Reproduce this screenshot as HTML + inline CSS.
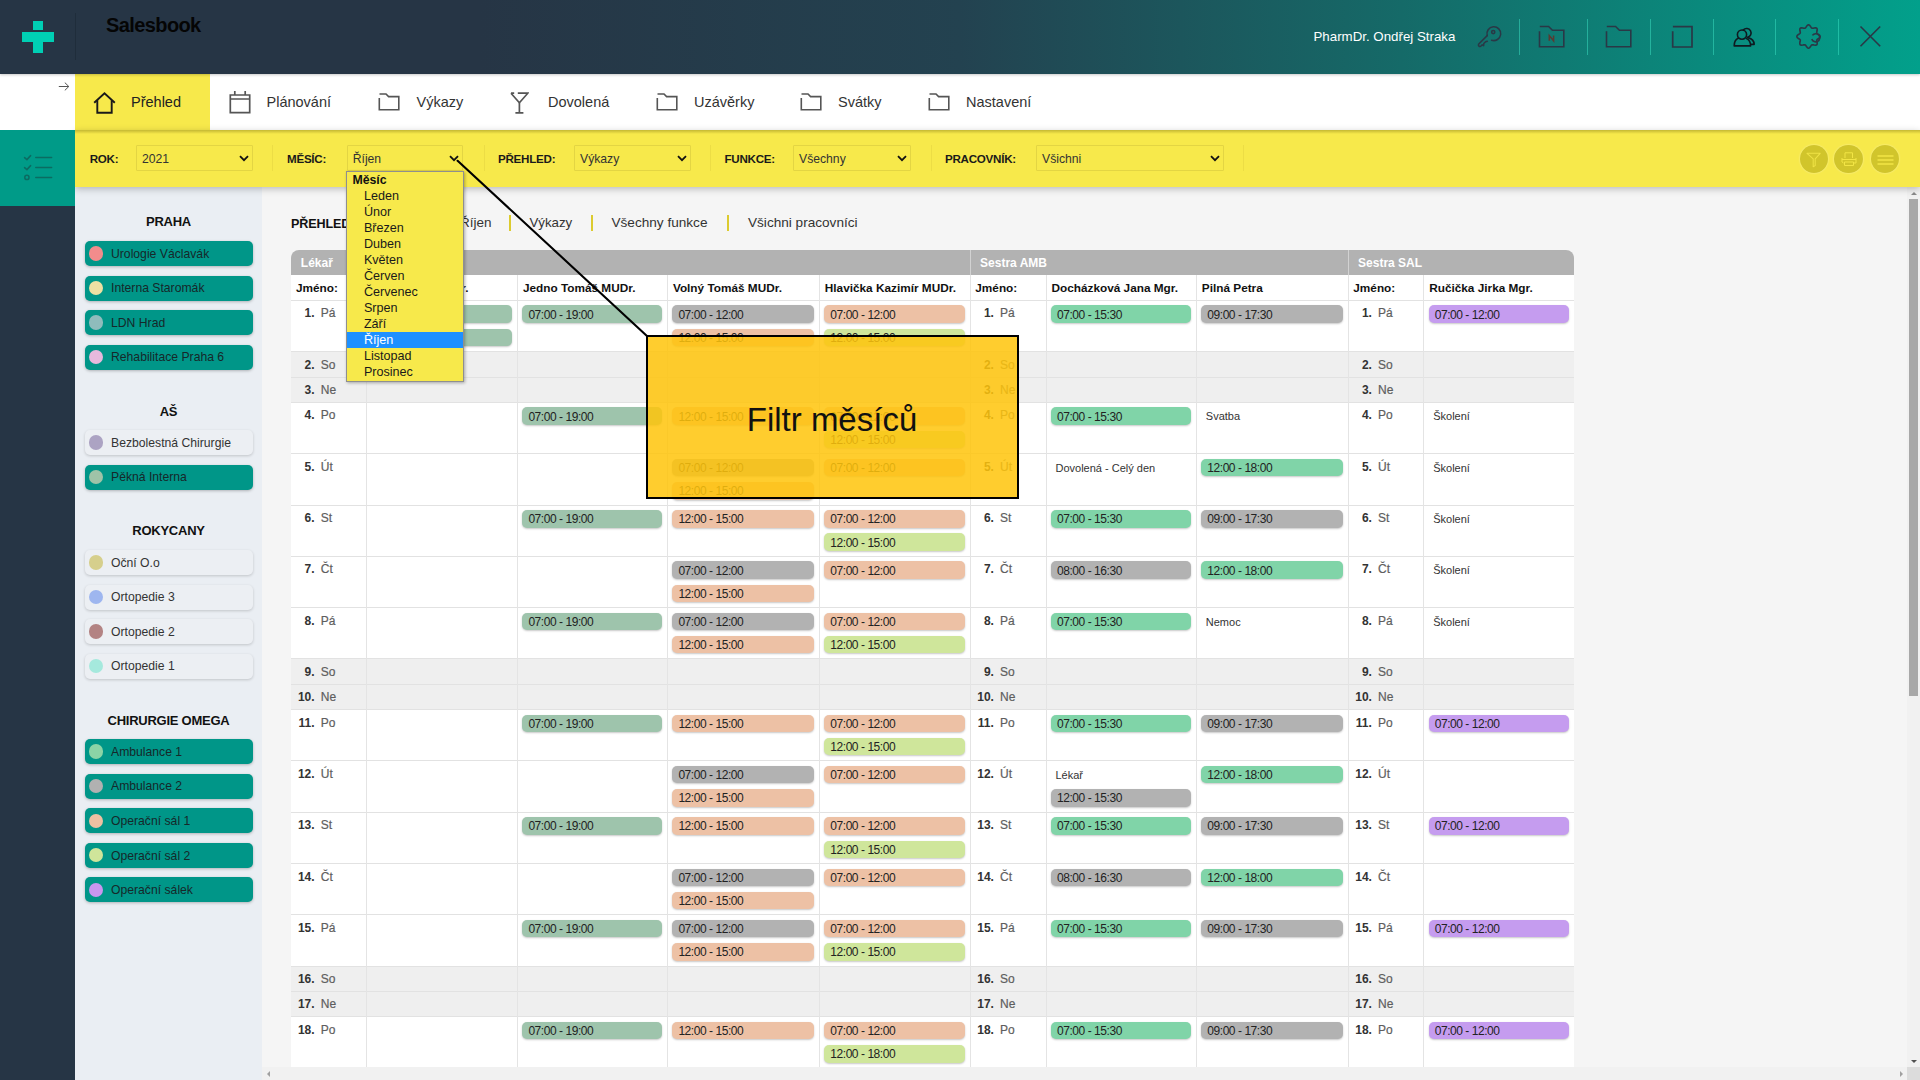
<!DOCTYPE html><html><head><meta charset="utf-8"><title>Salesbook</title><style>
*{box-sizing:border-box;margin:0;padding:0}
html,body{width:1920px;height:1080px;overflow:hidden;background:#f5f5f5;font-family:"Liberation Sans", sans-serif;}
.a{position:absolute}
.nw{white-space:nowrap}
#hdr{left:0;top:0;width:1920px;height:74px;z-index:4;box-shadow:0 1px 2.5px rgba(0,0,0,.22);background:linear-gradient(90deg,#263545 0%,#263545 25%,#234250 50%,#156a68 73%,#02a08b 100%)}
#nav{left:0;top:74px;width:1920px;height:56px;background:#fff}
.tab{position:absolute;top:0;height:56px}
.tab span{position:absolute;top:18px;font-size:14.5px;color:#333;white-space:nowrap;line-height:20px}
#fbar{left:75px;top:130px;width:1845px;height:57px;background:#f7e94b;box-shadow:0 2px 7px rgba(0,0,0,.24);z-index:5}
#teal{left:0;top:130px;width:75px;height:75.6px;background:#009b88;z-index:6}
#dark{left:0;top:205px;width:75px;height:875px;background:#263545}
#side{left:75px;top:187px;width:187px;height:893px;background:#eaeef3}
.lbl{position:absolute;top:150.5px;font-size:11.6px;letter-spacing:-0.25px;font-weight:700;color:#1a1a1a;line-height:16px;white-space:nowrap}
.sel{position:absolute;top:145px;height:26px;border:1px solid #e3d543;border-radius:1px}
.sel span{position:absolute;left:5px;top:4.7px;font-size:12.2px;color:#333;line-height:16px;white-space:nowrap}
.sel svg{position:absolute;right:3px;top:9px}
.fsep{position:absolute;top:145px;width:1px;height:26px;background:#ecdd45}
.rbtn{position:absolute;top:144.5px;width:28.5px;height:28.5px;border-radius:50%;background:#d1c52b;box-shadow:0 0 2px rgba(255,255,255,.5)}
.gh{position:absolute;font-size:13px;letter-spacing:-0.25px;font-weight:700;color:#111;text-align:center;width:187px;left:75px;line-height:16px}
.it{position:absolute;left:85px;width:168px;height:25px;border-radius:5px;box-shadow:0 1px 3px rgba(0,0,0,.25)}
.it.on{background:#009688}
.it.off{background:#eceff3;box-shadow:0 1px 3px rgba(0,0,0,.18)}
.it i{position:absolute;left:4.1px;top:5.3px;width:14.3px;height:14.3px;border-radius:50%}
.it span{position:absolute;left:26px;top:4.7px;font-size:12.2px;color:#16282a;line-height:16px;white-space:nowrap}
.it.off span{color:#333}
#main{left:262px;top:187px;width:1645px;height:880px;background:#f5f5f5;overflow:hidden}
.pill{position:absolute;height:17.5px;border-radius:5px;box-shadow:0 1px 2px rgba(0,0,0,.22);font-size:12px;letter-spacing:-0.45px;color:#222;line-height:17.5px;padding-left:6px;padding-top:1.3px;white-space:nowrap}
.cl{position:absolute;width:1px;background:#e4e4e4}
.rl{position:absolute;height:1px;background:#e2e2e2}
.dn{position:absolute;font-size:12px;font-weight:700;color:#333;text-align:right;width:24px;line-height:14px}
.dd{position:absolute;font-size:12px;color:#5e5e5e;-webkit-text-stroke:0.2px #5e5e5e;line-height:14px}
.ch{position:absolute;font-size:11.8px;font-weight:700;color:#111;line-height:14px;white-space:nowrap}
.tx{position:absolute;font-size:11px;color:#333;line-height:14px;white-space:nowrap}
</style></head><body><div id="hdr" class="a">
<div class="a" style="left:33px;top:20.5px;width:9.5px;height:9.5px;background:#00cfb4"></div>
<div class="a" style="left:21.7px;top:32px;width:32.3px;height:9.5px;background:#00cfb4"></div>
<div class="a" style="left:33px;top:41.5px;width:9.5px;height:11.3px;background:#00cfb4"></div>
<div class="a" style="left:75px;top:13px;width:1px;height:47px;background:#1f2d3b"></div>
<div class="a nw" style="left:106px;top:12.5px;font-size:20px;letter-spacing:-0.6px;font-weight:700;color:#050505;line-height:24px">Salesbook</div>
<div class="a nw" style="z-index:5;left:1313.5px;top:27.6px;font-size:13.3px;color:#fff;line-height:18px">PharmDr. Ondřej Straka</div>
<svg class="a" style="left:1476px;top:24px" width="26" height="25" viewBox="0 0 26 25" fill="none" stroke="#2a3846" stroke-width="1.55" stroke-linecap="round" stroke-linejoin="round">
<path d="M11.2 11.6 A6.9 6.9 0 1 1 15.6 16.2"/>
<path d="M11.2 11.6 L3 19.8 C2.3 20.5 2.2 21.6 3 22.2 C3.6 22.7 4.5 22.6 5 22 L6.2 20.8 L7.6 21.6 L7.8 19.5 L9.6 17.8 L11.3 17.2"/>
<circle cx="17.2" cy="8.1" r="1.6"/></svg>
<div class="a" style="left:1518.9px;top:19px;width:1.2px;height:36px;background:rgba(60,225,195,.5)"></div>
<div class="a" style="left:1586.5px;top:19px;width:1.2px;height:36px;background:rgba(60,225,195,.5)"></div>
<div class="a" style="left:1649.6px;top:19px;width:1.2px;height:36px;background:rgba(60,225,195,.5)"></div>
<div class="a" style="left:1712.6px;top:19px;width:1.2px;height:36px;background:rgba(60,225,195,.5)"></div>
<div class="a" style="left:1775px;top:19px;width:1.2px;height:36px;background:rgba(60,225,195,.5)"></div>
<div class="a" style="left:1838px;top:19px;width:1.2px;height:36px;background:rgba(60,225,195,.5)"></div>
<svg class="a" style="left:1538px;top:25px" width="28" height="24" viewBox="0 0 28 24" fill="none" stroke="#2a3846" stroke-width="1.6" stroke-linejoin="miter">
<path d="M1.5 6.2 L1.5 21.8 L25.8 21.8 L25.8 5.2 L14.4 5.2 L10.6 1.5 L1.8 1.5"/>
<path d="M11.3 15.8 L11.3 10.6 L15.6 15.8 L15.6 10.6" stroke="#5a3a32" stroke-width="1.5"/></svg>
<svg class="a" style="left:1605px;top:25px" width="28" height="24" viewBox="0 0 28 24" fill="none" stroke="#2a3846" stroke-width="1.6">
<path d="M1.5 6.2 L1.5 21.8 L25.8 21.8 L25.8 5.2 L14.4 5.2 L10.6 1.5 L1.8 1.5"/></svg>
<svg class="a" style="left:1671px;top:25px" width="23" height="24" viewBox="0 0 23 24" fill="none" stroke="#2a3846" stroke-width="1.7">
<path d="M1.7 6.3 L1.7 22 L21 22 L21 1.7 L1.9 1.7"/></svg>
<svg class="a" style="left:1732px;top:25px" width="25" height="24" viewBox="0 0 25 24" fill="none" stroke="#0f1a20" stroke-width="1.6" stroke-linejoin="round" stroke-linecap="round">
<circle cx="10" cy="9.6" r="4.6"/>
<path d="M11.3 4.9 A4.5 4.5 0 1 1 15.4 12.4"/>
<path d="M6.2 13.2 C3.6 14.2 2.2 16.8 2.2 20.9 L18.6 20.9 C18.6 17.5 17.5 15 14.6 13.6"/>
<path d="M16.4 12.9 C19.6 13.6 22 16.2 22.2 19.4 L18.8 19.4"/></svg>
<svg class="a" style="left:1795.6px;top:24.1px" width="25" height="25" viewBox="0 0 25 25" fill="none" stroke="#2a3846" stroke-width="1.6" stroke-linejoin="round">
<path d="M12.50 0.85 L13.25 1.06 L13.93 1.62 L14.51 2.40 L14.99 3.20 L15.44 3.85 L15.93 4.23 L16.54 4.31 L17.31 4.16 L18.22 3.94 L19.18 3.79 L20.06 3.88 L20.74 4.26 L21.12 4.94 L21.21 5.82 L21.06 6.78 L20.84 7.69 L20.69 8.46 L20.77 9.07 L21.15 9.56 L21.80 10.01 L22.60 10.49 L23.38 11.07 L23.94 11.75 L24.15 12.50 L23.94 13.25 L23.38 13.93 L22.60 14.51 L21.80 14.99 L21.15 15.44 L20.77 15.93 L20.69 16.54 L20.84 17.31 L21.06 18.22 L21.21 19.18 L21.12 20.06 L20.74 20.74 L20.06 21.12 L19.18 21.21 L18.22 21.06 L17.31 20.84 L16.54 20.69 L15.93 20.77 L15.44 21.15 L14.99 21.80 L14.51 22.60 L13.93 23.38 L13.25 23.94 L12.50 24.15 L11.75 23.94 L11.07 23.38 L10.49 22.60 L10.01 21.80 L9.56 21.15 L9.07 20.77 L8.46 20.69 L7.69 20.84 L6.78 21.06 L5.82 21.21 L4.94 21.12 L4.26 20.74 L3.88 20.06 L3.79 19.18 L3.94 18.22 L4.16 17.31 L4.31 16.54 L4.23 15.93 L3.85 15.44 L3.20 14.99 L2.40 14.51 L1.62 13.93 L1.06 13.25 L0.85 12.50 L1.06 11.75 L1.62 11.07 L2.40 10.49 L3.20 10.01 L3.85 9.56 L4.23 9.07 L4.31 8.46 L4.16 7.69 L3.94 6.78 L3.79 5.82 L3.88 4.94 L4.26 4.26 L4.94 3.88 L5.82 3.79 L6.78 3.94 L7.69 4.16 L8.46 4.31 L9.07 4.23 L9.56 3.85 L10.01 3.20 L10.49 2.40 L11.07 1.62 L11.75 1.06 L12.50 0.85 Z"/><path d="M16.4 11.4 A4.1 4.1 0 1 1 15.8 15"/></svg>
<svg class="a" style="left:1859px;top:25px" width="23" height="23" viewBox="0 0 23 23" fill="none" stroke="#2a3846" stroke-width="1.6">
<path d="M1.5 1.5 L21.2 21.2 M21.2 1.5 L1.5 21.2"/></svg>
</div>
<div id="nav" class="a">
<svg class="a" style="left:57.5px;top:8px" width="12" height="9" viewBox="0 0 12 9" fill="none" stroke="#555" stroke-width="1"><path d="M0.8 4.5 L10.8 4.5 M6.8 0.6 L10.8 4.5 L6.8 8.4"/></svg>
<div class="tab" style="left:75px;width:135px;background:#f7e94b"></div>
<svg class="a" style="left:93px;top:17.6px" width="23" height="22" viewBox="0 0 23 22" fill="none" stroke="#1a1a1a" stroke-width="1.9" stroke-linejoin="miter"><path d="M1.2 10.8 L11.5 1.3 L21.8 10.8"/><path d="M4.3 8.2 L4.3 20.8 L18.7 20.8 L18.7 8.2"/></svg>
<div class="tab" style="left:131px"><span style="color:#222">Přehled</span></div>
<svg class="a" style="left:228.5px;top:16px" width="22" height="24" viewBox="0 0 22 24" fill="none" stroke="#555" stroke-width="1.7"><path d="M1.3 5 L20.7 5 L20.7 22.7 L1.3 22.7 Z M1.3 9 L20.7 9 M5.8 1 L5.8 5.5 M16.2 1 L16.2 5.5"/></svg>
<div class="tab" style="left:266.5px"><span>Plánování</span></div>
<svg class="a" style="left:378px;top:19px" width="22" height="18" viewBox="0 0 22 18" fill="none" stroke="#555" stroke-width="1.6"><path d="M1.3 5 L1.3 16.7 L20.8 16.7 L20.8 3.6 L10.6 3.6 L8 1 L1.5 1"/></svg>
<div class="tab" style="left:416.5px"><span>Výkazy</span></div>
<svg class="a" style="left:509.5px;top:17.5px" width="19" height="22" viewBox="0 0 19 22" fill="none" stroke="#555" stroke-width="1.7"><path d="M1 1.2 L4.2 1.2 M7.8 1.2 L17.8 1.2 L9.4 10.8 L1 1.2"/><path d="M9.4 10.8 L9.4 20.6 M5.4 20.8 L13.4 20.8"/></svg>
<div class="tab" style="left:548px"><span>Dovolená</span></div>
<svg class="a" style="left:655.5px;top:19px" width="22" height="18" viewBox="0 0 22 18" fill="none" stroke="#555" stroke-width="1.6"><path d="M1.3 5 L1.3 16.7 L20.8 16.7 L20.8 3.6 L10.6 3.6 L8 1 L1.5 1"/></svg>
<div class="tab" style="left:694px"><span>Uzávěrky</span></div>
<svg class="a" style="left:799.5px;top:19px" width="22" height="18" viewBox="0 0 22 18" fill="none" stroke="#555" stroke-width="1.6"><path d="M1.3 5 L1.3 16.7 L20.8 16.7 L20.8 3.6 L10.6 3.6 L8 1 L1.5 1"/></svg>
<div class="tab" style="left:838px"><span>Svátky</span></div>
<svg class="a" style="left:927.5px;top:19px" width="22" height="18" viewBox="0 0 22 18" fill="none" stroke="#555" stroke-width="1.6"><path d="M1.3 5 L1.3 16.7 L20.8 16.7 L20.8 3.6 L10.6 3.6 L8 1 L1.5 1"/></svg>
<div class="tab" style="left:966px"><span>Nastavení</span></div>
</div>
<div id="dark" class="a"></div>
<div id="teal" class="a">
<svg class="a" style="left:22px;top:23.5px" width="32" height="27" viewBox="0 0 32 27" fill="none" stroke="#0b6c62" stroke-width="1.55" stroke-linecap="round" stroke-linejoin="round"><path d="M2.6 3.6 L4.9 5.6 L8.6 1.6 M2.6 13.6 L4.9 15.6 L8.6 11.6"/><circle cx="4.9" cy="23.4" r="2.1"/><path d="M13.8 3.5 L29.6 3.5 M13.8 13.5 L29.6 13.5 M13.8 23.5 L29.6 23.5"/></svg>
</div>
<div id="fbar" class="a"><div class="a" style="left:0;top:0;width:1845px;height:4px;background:linear-gradient(rgba(90,80,0,.32),rgba(90,80,0,0))"></div></div>
<div class="lbl" style="left:89.7px;z-index:7">ROK:</div>
<div class="sel" style="left:136px;width:116.5px;z-index:7"><span>2021</span><svg width="10" height="7" viewBox="0 0 10 7" fill="none" stroke="#111" stroke-width="1.8"><path d="M1 1.2 L5 5.2 L9 1.2"/></svg></div>
<div class="fsep" style="left:272px;z-index:7"></div>
<div class="lbl" style="left:287px;z-index:7">MĚSÍC:</div>
<div class="sel" style="left:346.7px;width:116.3px;z-index:7"><span>Říjen</span><svg width="10" height="7" viewBox="0 0 10 7" fill="none" stroke="#111" stroke-width="1.8"><path d="M1 1.2 L5 5.2 L9 1.2"/></svg></div>
<div class="fsep" style="left:483.7px;z-index:7"></div>
<div class="lbl" style="left:498px;z-index:7">PŘEHLED:</div>
<div class="sel" style="left:574px;width:116.5px;z-index:7"><span>Výkazy</span><svg width="10" height="7" viewBox="0 0 10 7" fill="none" stroke="#111" stroke-width="1.8"><path d="M1 1.2 L5 5.2 L9 1.2"/></svg></div>
<div class="fsep" style="left:709.5px;z-index:7"></div>
<div class="lbl" style="left:724.5px;z-index:7">FUNKCE:</div>
<div class="sel" style="left:793px;width:117.5px;z-index:7"><span>Všechny</span><svg width="10" height="7" viewBox="0 0 10 7" fill="none" stroke="#111" stroke-width="1.8"><path d="M1 1.2 L5 5.2 L9 1.2"/></svg></div>
<div class="fsep" style="left:930.5px;z-index:7"></div>
<div class="lbl" style="left:945px;z-index:7">PRACOVNÍK:</div>
<div class="sel" style="left:1036px;width:187.5px;z-index:7"><span>Všichni</span><svg width="10" height="7" viewBox="0 0 10 7" fill="none" stroke="#111" stroke-width="1.8"><path d="M1 1.2 L5 5.2 L9 1.2"/></svg></div>
<div class="fsep" style="left:1243px;z-index:7"></div>
<div class="rbtn" style="left:1799.5px;z-index:7"><svg class="a" style="left:6.5px;top:7px" width="16" height="16" viewBox="0 0 16 16" fill="none" stroke="#efe245" stroke-width="1.05" stroke-linejoin="round"><path d="M1 1.3 L14.2 1.3 L9.2 6.8 L9.2 13.6 L7.2 14.8 L7.2 6.8 Z"/></svg></div>
<div class="rbtn" style="left:1834.3px;z-index:7"><svg class="a" style="left:6.5px;top:7px" width="16" height="15" viewBox="0 0 16 15" fill="none" stroke="#f2e545" stroke-width="1"><path d="M4 6 L4 0.8 L11.5 0.8 L11.5 6"/><path d="M1 6 L1 10 L2.5 11 M1 7.5 L15 7.5 M15 6 L15 11 L13 11"/><path d="M3.5 10 L12.5 10 L12.5 13.5 L3.5 13.5 Z"/></svg></div>
<div class="rbtn" style="left:1870.8px;z-index:7"><svg class="a" style="left:6px;top:10.1px" width="17" height="10" viewBox="0 0 17 10" fill="none" stroke="#f2e545" stroke-width="1.4"><path d="M0.5 1 L16.5 1 M0.5 5 L16.5 5 M0.5 9 L16.5 9"/></svg></div>
<div id="side" class="a"></div>
<div class="gh" style="top:214.4px">PRAHA</div>
<div class="it on" style="top:241.10px"><i style="background:#f28c8c"></i><span>Urologie Václavák</span></div>
<div class="it on" style="top:275.65px"><i style="background:#eee0a3"></i><span>Interna Staromák</span></div>
<div class="it on" style="top:310.20px"><i style="background:#8fbcbc"></i><span>LDN Hrad</span></div>
<div class="it on" style="top:344.75px"><i style="background:#e6b9dd"></i><span>Rehabilitace Praha 6</span></div>
<div class="gh" style="top:403.5px">AŠ</div>
<div class="it off" style="top:430.20px"><i style="background:#aca3c3"></i><span>Bezbolestná Chirurgie</span></div>
<div class="it on" style="top:464.75px"><i style="background:#9fc3a8"></i><span>Pěkná Interna</span></div>
<div class="gh" style="top:523.3px">ROKYCANY</div>
<div class="it off" style="top:550.00px"><i style="background:#d6cf8c"></i><span>Oční O.o</span></div>
<div class="it off" style="top:584.55px"><i style="background:#9eb6ef"></i><span>Ortopedie 3</span></div>
<div class="it off" style="top:619.10px"><i style="background:#b38383"></i><span>Ortopedie 2</span></div>
<div class="it off" style="top:653.65px"><i style="background:#a5e9dd"></i><span>Ortopedie 1</span></div>
<div class="gh" style="top:712.5px">CHIRURGIE OMEGA</div>
<div class="it on" style="top:739.20px"><i style="background:#8bd4a6"></i><span>Ambulance 1</span></div>
<div class="it on" style="top:773.75px"><i style="background:#b1b1b1"></i><span>Ambulance 2</span></div>
<div class="it on" style="top:808.30px"><i style="background:#eec0a2"></i><span>Operační sál 1</span></div>
<div class="it on" style="top:842.85px"><i style="background:#cfe59a"></i><span>Operační sál 2</span></div>
<div class="it on" style="top:877.40px"><i style="background:#c996ef"></i><span>Operační sálek</span></div>
<div id="main" class="a"></div>
<div class="a nw" style="left:291px;top:216px;font-size:12.6px;letter-spacing:-0.15px;font-weight:700;color:#111;line-height:16px">PŘEHLED</div>
<div class="a nw" style="left:365px;top:215px;font-size:13.5px;color:#333;line-height:16px">2021</div>
<div class="a" style="left:408px;top:215px;width:2px;height:15.5px;background:#dccb2f"></div>
<div class="a nw" style="left:460px;top:215px;font-size:13.5px;color:#333;line-height:16px">Říjen</div>
<div class="a" style="left:508.8px;top:215px;width:2px;height:15.5px;background:#dccb2f"></div>
<div class="a" style="left:591.3px;top:215px;width:2px;height:15.5px;background:#dccb2f"></div>
<div class="a" style="left:727.3px;top:215px;width:2px;height:15.5px;background:#dccb2f"></div>
<div class="a nw" style="left:529.4px;top:215px;font-size:13.3px;color:#333;line-height:16px">Výkazy</div>
<div class="a nw" style="left:611.5px;top:215px;font-size:13.6px;color:#333;line-height:16px">Všechny funkce</div>
<div class="a nw" style="left:748px;top:215px;font-size:13.6px;color:#333;line-height:16px">Všichni pracovníci</div>
<div class="a" style="left:291.0px;top:249.8px;width:1282.80px;height:25.20px;background:#b2b2b2;border-radius:8px 8px 0 0"></div>
<div class="a" style="left:969.80px;top:249.8px;width:1px;height:25.20px;background:#d2d2d2"></div>
<div class="a" style="left:1347.80px;top:249.8px;width:1px;height:25.20px;background:#d2d2d2"></div>
<div class="a nw" style="left:300.80px;top:256.10px;font-size:12px;font-weight:700;color:#fff;line-height:14px">Lékař</div>
<div class="a nw" style="left:980.10px;top:256.10px;font-size:12px;font-weight:700;color:#fff;line-height:14px">Sestra AMB</div>
<div class="a nw" style="left:1358.10px;top:256.10px;font-size:12px;font-weight:700;color:#fff;line-height:14px">Sestra SAL</div>
<div class="a" style="left:291.0px;top:275.0px;width:1282.80px;height:792.00px;background:#fff"></div>
<div class="ch" style="left:296.00px;top:281.40px">Jméno:</div>
<div class="ch" style="left:372.20px;top:281.40px">Malý Karel MUDr.</div>
<div class="ch" style="left:522.90px;top:281.40px">Jedno Tomáš MUDr.</div>
<div class="ch" style="left:672.90px;top:281.40px">Volný Tomáš MUDr.</div>
<div class="ch" style="left:824.80px;top:281.40px">Hlavička Kazimír MUDr.</div>
<div class="ch" style="left:975.30px;top:281.40px">Jméno:</div>
<div class="ch" style="left:1051.50px;top:281.40px">Docházková Jana Mgr.</div>
<div class="ch" style="left:1201.80px;top:281.40px">Pilná Petra</div>
<div class="ch" style="left:1353.30px;top:281.40px">Jméno:</div>
<div class="ch" style="left:1429.20px;top:281.40px">Ručička Jirka Mgr.</div>
<div class="rl" style="left:291.0px;top:299.90px;width:1282.80px"></div>
<div class="dn" style="left:290.60px;top:306.40px">1.</div>
<div class="dd" style="left:320.80px;top:306.40px">Pá</div>
<div class="dn" style="left:969.90px;top:306.40px">1.</div>
<div class="dd" style="left:1000.10px;top:306.40px">Pá</div>
<div class="dn" style="left:1347.90px;top:306.40px">1.</div>
<div class="dd" style="left:1378.10px;top:306.40px">Pá</div>
<div class="pill" style="left:371.70px;top:305.40px;width:140.80px;background:#9ec4ac">07:00 - 19:00</div>
<div class="pill" style="left:371.70px;top:328.70px;width:140.80px;background:#9ec4ac">12:00 - 19:00</div>
<div class="pill" style="left:522.40px;top:305.40px;width:140.10px;background:#9ec4ac">07:00 - 19:00</div>
<div class="pill" style="left:672.40px;top:305.40px;width:142.00px;background:#b2b2b2">07:00 - 12:00</div>
<div class="pill" style="left:672.40px;top:328.70px;width:142.00px;background:#edc1a5">12:00 - 15:00</div>
<div class="pill" style="left:824.30px;top:305.40px;width:141.10px;background:#edc1a5">07:00 - 12:00</div>
<div class="pill" style="left:824.30px;top:328.70px;width:141.10px;background:#cfe69b">12:00 - 15:00</div>
<div class="pill" style="left:1051.00px;top:305.40px;width:140.40px;background:#80d4a8">07:00 - 15:30</div>
<div class="pill" style="left:1201.30px;top:305.40px;width:142.10px;background:#b2b2b2">09:00 - 17:30</div>
<div class="pill" style="left:1428.70px;top:305.40px;width:140.20px;background:#c59cef">07:00 - 12:00</div>
<div class="a" style="left:291.0px;top:351.70px;width:1282.80px;height:25.35px;background:#efefef"></div>
<div class="rl" style="left:291.0px;top:351.20px;width:1282.80px"></div>
<div class="dn" style="left:290.60px;top:357.70px">2.</div>
<div class="dd" style="left:320.80px;top:357.70px">So</div>
<div class="dn" style="left:969.90px;top:357.70px">2.</div>
<div class="dd" style="left:1000.10px;top:357.70px">So</div>
<div class="dn" style="left:1347.90px;top:357.70px">2.</div>
<div class="dd" style="left:1378.10px;top:357.70px">So</div>
<div class="a" style="left:291.0px;top:377.05px;width:1282.80px;height:25.35px;background:#efefef"></div>
<div class="rl" style="left:291.0px;top:376.55px;width:1282.80px"></div>
<div class="dn" style="left:290.60px;top:383.05px">3.</div>
<div class="dd" style="left:320.80px;top:383.05px">Ne</div>
<div class="dn" style="left:969.90px;top:383.05px">3.</div>
<div class="dd" style="left:1000.10px;top:383.05px">Ne</div>
<div class="dn" style="left:1347.90px;top:383.05px">3.</div>
<div class="dd" style="left:1378.10px;top:383.05px">Ne</div>
<div class="rl" style="left:291.0px;top:401.90px;width:1282.80px"></div>
<div class="dn" style="left:290.60px;top:408.40px">4.</div>
<div class="dd" style="left:320.80px;top:408.40px">Po</div>
<div class="dn" style="left:969.90px;top:408.40px">4.</div>
<div class="dd" style="left:1000.10px;top:408.40px">Po</div>
<div class="dn" style="left:1347.90px;top:408.40px">4.</div>
<div class="dd" style="left:1378.10px;top:408.40px">Po</div>
<div class="pill" style="left:522.40px;top:407.40px;width:140.10px;background:#9ec4ac">07:00 - 19:00</div>
<div class="pill" style="left:672.40px;top:407.40px;width:142.00px;background:#edc1a5">12:00 - 15:00</div>
<div class="pill" style="left:824.30px;top:407.40px;width:141.10px;background:#edc1a5">07:00 - 12:00</div>
<div class="pill" style="left:824.30px;top:430.70px;width:141.10px;background:#cfe69b">12:00 - 15:00</div>
<div class="pill" style="left:1051.00px;top:407.40px;width:140.40px;background:#80d4a8">07:00 - 15:30</div>
<div class="tx" style="left:1205.80px;top:409.40px">Svatba</div>
<div class="tx" style="left:1433.20px;top:409.40px">Školení</div>
<div class="rl" style="left:291.0px;top:453.20px;width:1282.80px"></div>
<div class="dn" style="left:290.60px;top:459.70px">5.</div>
<div class="dd" style="left:320.80px;top:459.70px">Út</div>
<div class="dn" style="left:969.90px;top:459.70px">5.</div>
<div class="dd" style="left:1000.10px;top:459.70px">Út</div>
<div class="dn" style="left:1347.90px;top:459.70px">5.</div>
<div class="dd" style="left:1378.10px;top:459.70px">Út</div>
<div class="pill" style="left:672.40px;top:458.70px;width:142.00px;background:#b2b2b2">07:00 - 12:00</div>
<div class="pill" style="left:672.40px;top:482.00px;width:142.00px;background:#edc1a5">12:00 - 15:00</div>
<div class="pill" style="left:824.30px;top:458.70px;width:141.10px;background:#edc1a5">07:00 - 12:00</div>
<div class="tx" style="left:1055.50px;top:460.70px">Dovolená - Celý den</div>
<div class="pill" style="left:1201.30px;top:458.70px;width:142.10px;background:#80d4a8">12:00 - 18:00</div>
<div class="tx" style="left:1433.20px;top:460.70px">Školení</div>
<div class="rl" style="left:291.0px;top:504.50px;width:1282.80px"></div>
<div class="dn" style="left:290.60px;top:511.00px">6.</div>
<div class="dd" style="left:320.80px;top:511.00px">St</div>
<div class="dn" style="left:969.90px;top:511.00px">6.</div>
<div class="dd" style="left:1000.10px;top:511.00px">St</div>
<div class="dn" style="left:1347.90px;top:511.00px">6.</div>
<div class="dd" style="left:1378.10px;top:511.00px">St</div>
<div class="pill" style="left:522.40px;top:510.00px;width:140.10px;background:#9ec4ac">07:00 - 19:00</div>
<div class="pill" style="left:672.40px;top:510.00px;width:142.00px;background:#edc1a5">12:00 - 15:00</div>
<div class="pill" style="left:824.30px;top:510.00px;width:141.10px;background:#edc1a5">07:00 - 12:00</div>
<div class="pill" style="left:824.30px;top:533.30px;width:141.10px;background:#cfe69b">12:00 - 15:00</div>
<div class="pill" style="left:1051.00px;top:510.00px;width:140.40px;background:#80d4a8">07:00 - 15:30</div>
<div class="pill" style="left:1201.30px;top:510.00px;width:142.10px;background:#b2b2b2">09:00 - 17:30</div>
<div class="tx" style="left:1433.20px;top:512.00px">Školení</div>
<div class="rl" style="left:291.0px;top:555.80px;width:1282.80px"></div>
<div class="dn" style="left:290.60px;top:562.30px">7.</div>
<div class="dd" style="left:320.80px;top:562.30px">Čt</div>
<div class="dn" style="left:969.90px;top:562.30px">7.</div>
<div class="dd" style="left:1000.10px;top:562.30px">Čt</div>
<div class="dn" style="left:1347.90px;top:562.30px">7.</div>
<div class="dd" style="left:1378.10px;top:562.30px">Čt</div>
<div class="pill" style="left:672.40px;top:561.30px;width:142.00px;background:#b2b2b2">07:00 - 12:00</div>
<div class="pill" style="left:672.40px;top:584.60px;width:142.00px;background:#edc1a5">12:00 - 15:00</div>
<div class="pill" style="left:824.30px;top:561.30px;width:141.10px;background:#edc1a5">07:00 - 12:00</div>
<div class="pill" style="left:1051.00px;top:561.30px;width:140.40px;background:#b2b2b2">08:00 - 16:30</div>
<div class="pill" style="left:1201.30px;top:561.30px;width:142.10px;background:#80d4a8">12:00 - 18:00</div>
<div class="tx" style="left:1433.20px;top:563.30px">Školení</div>
<div class="rl" style="left:291.0px;top:607.10px;width:1282.80px"></div>
<div class="dn" style="left:290.60px;top:613.60px">8.</div>
<div class="dd" style="left:320.80px;top:613.60px">Pá</div>
<div class="dn" style="left:969.90px;top:613.60px">8.</div>
<div class="dd" style="left:1000.10px;top:613.60px">Pá</div>
<div class="dn" style="left:1347.90px;top:613.60px">8.</div>
<div class="dd" style="left:1378.10px;top:613.60px">Pá</div>
<div class="pill" style="left:522.40px;top:612.60px;width:140.10px;background:#9ec4ac">07:00 - 19:00</div>
<div class="pill" style="left:672.40px;top:612.60px;width:142.00px;background:#b2b2b2">07:00 - 12:00</div>
<div class="pill" style="left:672.40px;top:635.90px;width:142.00px;background:#edc1a5">12:00 - 15:00</div>
<div class="pill" style="left:824.30px;top:612.60px;width:141.10px;background:#edc1a5">07:00 - 12:00</div>
<div class="pill" style="left:824.30px;top:635.90px;width:141.10px;background:#cfe69b">12:00 - 15:00</div>
<div class="pill" style="left:1051.00px;top:612.60px;width:140.40px;background:#80d4a8">07:00 - 15:30</div>
<div class="tx" style="left:1205.80px;top:614.60px">Nemoc</div>
<div class="tx" style="left:1433.20px;top:614.60px">Školení</div>
<div class="a" style="left:291.0px;top:658.90px;width:1282.80px;height:25.35px;background:#efefef"></div>
<div class="rl" style="left:291.0px;top:658.40px;width:1282.80px"></div>
<div class="dn" style="left:290.60px;top:664.90px">9.</div>
<div class="dd" style="left:320.80px;top:664.90px">So</div>
<div class="dn" style="left:969.90px;top:664.90px">9.</div>
<div class="dd" style="left:1000.10px;top:664.90px">So</div>
<div class="dn" style="left:1347.90px;top:664.90px">9.</div>
<div class="dd" style="left:1378.10px;top:664.90px">So</div>
<div class="a" style="left:291.0px;top:684.25px;width:1282.80px;height:25.35px;background:#efefef"></div>
<div class="rl" style="left:291.0px;top:683.75px;width:1282.80px"></div>
<div class="dn" style="left:290.60px;top:690.25px">10.</div>
<div class="dd" style="left:320.80px;top:690.25px">Ne</div>
<div class="dn" style="left:969.90px;top:690.25px">10.</div>
<div class="dd" style="left:1000.10px;top:690.25px">Ne</div>
<div class="dn" style="left:1347.90px;top:690.25px">10.</div>
<div class="dd" style="left:1378.10px;top:690.25px">Ne</div>
<div class="rl" style="left:291.0px;top:709.10px;width:1282.80px"></div>
<div class="dn" style="left:290.60px;top:715.60px">11.</div>
<div class="dd" style="left:320.80px;top:715.60px">Po</div>
<div class="dn" style="left:969.90px;top:715.60px">11.</div>
<div class="dd" style="left:1000.10px;top:715.60px">Po</div>
<div class="dn" style="left:1347.90px;top:715.60px">11.</div>
<div class="dd" style="left:1378.10px;top:715.60px">Po</div>
<div class="pill" style="left:522.40px;top:714.60px;width:140.10px;background:#9ec4ac">07:00 - 19:00</div>
<div class="pill" style="left:672.40px;top:714.60px;width:142.00px;background:#edc1a5">12:00 - 15:00</div>
<div class="pill" style="left:824.30px;top:714.60px;width:141.10px;background:#edc1a5">07:00 - 12:00</div>
<div class="pill" style="left:824.30px;top:737.90px;width:141.10px;background:#cfe69b">12:00 - 15:00</div>
<div class="pill" style="left:1051.00px;top:714.60px;width:140.40px;background:#80d4a8">07:00 - 15:30</div>
<div class="pill" style="left:1201.30px;top:714.60px;width:142.10px;background:#b2b2b2">09:00 - 17:30</div>
<div class="pill" style="left:1428.70px;top:714.60px;width:140.20px;background:#c59cef">07:00 - 12:00</div>
<div class="rl" style="left:291.0px;top:760.40px;width:1282.80px"></div>
<div class="dn" style="left:290.60px;top:766.90px">12.</div>
<div class="dd" style="left:320.80px;top:766.90px">Út</div>
<div class="dn" style="left:969.90px;top:766.90px">12.</div>
<div class="dd" style="left:1000.10px;top:766.90px">Út</div>
<div class="dn" style="left:1347.90px;top:766.90px">12.</div>
<div class="dd" style="left:1378.10px;top:766.90px">Út</div>
<div class="pill" style="left:672.40px;top:765.90px;width:142.00px;background:#b2b2b2">07:00 - 12:00</div>
<div class="pill" style="left:672.40px;top:789.20px;width:142.00px;background:#edc1a5">12:00 - 15:00</div>
<div class="pill" style="left:824.30px;top:765.90px;width:141.10px;background:#edc1a5">07:00 - 12:00</div>
<div class="tx" style="left:1055.50px;top:767.90px">Lékař</div>
<div class="pill" style="left:1051.00px;top:789.20px;width:140.40px;background:#b2b2b2">12:00 - 15:30</div>
<div class="pill" style="left:1201.30px;top:765.90px;width:142.10px;background:#80d4a8">12:00 - 18:00</div>
<div class="rl" style="left:291.0px;top:811.70px;width:1282.80px"></div>
<div class="dn" style="left:290.60px;top:818.20px">13.</div>
<div class="dd" style="left:320.80px;top:818.20px">St</div>
<div class="dn" style="left:969.90px;top:818.20px">13.</div>
<div class="dd" style="left:1000.10px;top:818.20px">St</div>
<div class="dn" style="left:1347.90px;top:818.20px">13.</div>
<div class="dd" style="left:1378.10px;top:818.20px">St</div>
<div class="pill" style="left:522.40px;top:817.20px;width:140.10px;background:#9ec4ac">07:00 - 19:00</div>
<div class="pill" style="left:672.40px;top:817.20px;width:142.00px;background:#edc1a5">12:00 - 15:00</div>
<div class="pill" style="left:824.30px;top:817.20px;width:141.10px;background:#edc1a5">07:00 - 12:00</div>
<div class="pill" style="left:824.30px;top:840.50px;width:141.10px;background:#cfe69b">12:00 - 15:00</div>
<div class="pill" style="left:1051.00px;top:817.20px;width:140.40px;background:#80d4a8">07:00 - 15:30</div>
<div class="pill" style="left:1201.30px;top:817.20px;width:142.10px;background:#b2b2b2">09:00 - 17:30</div>
<div class="pill" style="left:1428.70px;top:817.20px;width:140.20px;background:#c59cef">07:00 - 12:00</div>
<div class="rl" style="left:291.0px;top:863.00px;width:1282.80px"></div>
<div class="dn" style="left:290.60px;top:869.50px">14.</div>
<div class="dd" style="left:320.80px;top:869.50px">Čt</div>
<div class="dn" style="left:969.90px;top:869.50px">14.</div>
<div class="dd" style="left:1000.10px;top:869.50px">Čt</div>
<div class="dn" style="left:1347.90px;top:869.50px">14.</div>
<div class="dd" style="left:1378.10px;top:869.50px">Čt</div>
<div class="pill" style="left:672.40px;top:868.50px;width:142.00px;background:#b2b2b2">07:00 - 12:00</div>
<div class="pill" style="left:672.40px;top:891.80px;width:142.00px;background:#edc1a5">12:00 - 15:00</div>
<div class="pill" style="left:824.30px;top:868.50px;width:141.10px;background:#edc1a5">07:00 - 12:00</div>
<div class="pill" style="left:1051.00px;top:868.50px;width:140.40px;background:#b2b2b2">08:00 - 16:30</div>
<div class="pill" style="left:1201.30px;top:868.50px;width:142.10px;background:#80d4a8">12:00 - 18:00</div>
<div class="rl" style="left:291.0px;top:914.30px;width:1282.80px"></div>
<div class="dn" style="left:290.60px;top:920.80px">15.</div>
<div class="dd" style="left:320.80px;top:920.80px">Pá</div>
<div class="dn" style="left:969.90px;top:920.80px">15.</div>
<div class="dd" style="left:1000.10px;top:920.80px">Pá</div>
<div class="dn" style="left:1347.90px;top:920.80px">15.</div>
<div class="dd" style="left:1378.10px;top:920.80px">Pá</div>
<div class="pill" style="left:522.40px;top:919.80px;width:140.10px;background:#9ec4ac">07:00 - 19:00</div>
<div class="pill" style="left:672.40px;top:919.80px;width:142.00px;background:#b2b2b2">07:00 - 12:00</div>
<div class="pill" style="left:672.40px;top:943.10px;width:142.00px;background:#edc1a5">12:00 - 15:00</div>
<div class="pill" style="left:824.30px;top:919.80px;width:141.10px;background:#edc1a5">07:00 - 12:00</div>
<div class="pill" style="left:824.30px;top:943.10px;width:141.10px;background:#cfe69b">12:00 - 15:00</div>
<div class="pill" style="left:1051.00px;top:919.80px;width:140.40px;background:#80d4a8">07:00 - 15:30</div>
<div class="pill" style="left:1201.30px;top:919.80px;width:142.10px;background:#b2b2b2">09:00 - 17:30</div>
<div class="pill" style="left:1428.70px;top:919.80px;width:140.20px;background:#c59cef">07:00 - 12:00</div>
<div class="a" style="left:291.0px;top:966.10px;width:1282.80px;height:25.35px;background:#efefef"></div>
<div class="rl" style="left:291.0px;top:965.60px;width:1282.80px"></div>
<div class="dn" style="left:290.60px;top:972.10px">16.</div>
<div class="dd" style="left:320.80px;top:972.10px">So</div>
<div class="dn" style="left:969.90px;top:972.10px">16.</div>
<div class="dd" style="left:1000.10px;top:972.10px">So</div>
<div class="dn" style="left:1347.90px;top:972.10px">16.</div>
<div class="dd" style="left:1378.10px;top:972.10px">So</div>
<div class="a" style="left:291.0px;top:991.45px;width:1282.80px;height:25.35px;background:#efefef"></div>
<div class="rl" style="left:291.0px;top:990.95px;width:1282.80px"></div>
<div class="dn" style="left:290.60px;top:997.45px">17.</div>
<div class="dd" style="left:320.80px;top:997.45px">Ne</div>
<div class="dn" style="left:969.90px;top:997.45px">17.</div>
<div class="dd" style="left:1000.10px;top:997.45px">Ne</div>
<div class="dn" style="left:1347.90px;top:997.45px">17.</div>
<div class="dd" style="left:1378.10px;top:997.45px">Ne</div>
<div class="rl" style="left:291.0px;top:1016.30px;width:1282.80px"></div>
<div class="dn" style="left:290.60px;top:1022.80px">18.</div>
<div class="dd" style="left:320.80px;top:1022.80px">Po</div>
<div class="dn" style="left:969.90px;top:1022.80px">18.</div>
<div class="dd" style="left:1000.10px;top:1022.80px">Po</div>
<div class="dn" style="left:1347.90px;top:1022.80px">18.</div>
<div class="dd" style="left:1378.10px;top:1022.80px">Po</div>
<div class="pill" style="left:522.40px;top:1021.80px;width:140.10px;background:#9ec4ac">07:00 - 19:00</div>
<div class="pill" style="left:672.40px;top:1021.80px;width:142.00px;background:#edc1a5">12:00 - 15:00</div>
<div class="pill" style="left:824.30px;top:1021.80px;width:141.10px;background:#edc1a5">07:00 - 12:00</div>
<div class="pill" style="left:824.30px;top:1045.10px;width:141.10px;background:#cfe69b">12:00 - 18:00</div>
<div class="pill" style="left:1051.00px;top:1021.80px;width:140.40px;background:#80d4a8">07:00 - 15:30</div>
<div class="pill" style="left:1201.30px;top:1021.80px;width:142.10px;background:#b2b2b2">09:00 - 17:30</div>
<div class="pill" style="left:1428.70px;top:1021.80px;width:140.20px;background:#c59cef">07:00 - 12:00</div>
<div class="rl" style="left:291.0px;top:299.90px;width:1282.80px"></div>
<div class="cl" style="left:366.20px;top:275.0px;height:792.00px"></div>
<div class="cl" style="left:516.90px;top:275.0px;height:792.00px"></div>
<div class="cl" style="left:666.90px;top:275.0px;height:792.00px"></div>
<div class="cl" style="left:818.80px;top:275.0px;height:792.00px"></div>
<div class="cl" style="left:969.80px;top:275.0px;height:792.00px"></div>
<div class="cl" style="left:1045.50px;top:275.0px;height:792.00px"></div>
<div class="cl" style="left:1195.80px;top:275.0px;height:792.00px"></div>
<div class="cl" style="left:1347.80px;top:275.0px;height:792.00px"></div>
<div class="cl" style="left:1423.20px;top:275.0px;height:792.00px"></div>
<div class="a" style="left:1907px;top:187px;width:13px;height:880px;background:#f1f1f1"></div>
<div class="a" style="left:1908.9px;top:199.2px;width:9.4px;height:496.6px;background:#a8a8a8"></div>
<div class="a" style="left:1910.5px;top:192px;width:0;height:0;border-left:3px solid transparent;border-right:3px solid transparent;border-bottom:3.5px solid #8a8a8a"></div>
<div class="a" style="left:1910.5px;top:1059.5px;width:0;height:0;border-left:3px solid transparent;border-right:3px solid transparent;border-top:3.5px solid #505050"></div>
<div class="a" style="left:262px;top:1067px;width:1645px;height:13px;background:#f1f1f1"></div>
<div class="a" style="left:1907px;top:1067px;width:13px;height:13px;background:#dcdcdc"></div>
<div class="a" style="left:267px;top:1071px;width:0;height:0;border-top:3px solid transparent;border-bottom:3px solid transparent;border-right:3.5px solid #a0a0a0"></div>
<div class="a" style="left:1899.5px;top:1071px;width:0;height:0;border-top:3px solid transparent;border-bottom:3px solid transparent;border-left:3.5px solid #a0a0a0"></div>
<div class="a" style="left:346.4px;top:171px;width:117.4px;height:210.5px;background:#f7e94b;border:1px solid #8f8f8f;box-shadow:1px 1px 3px rgba(0,0,0,.3);z-index:20">
<div class="a nw" style="left:5px;top:-0.4px;font-size:12.3px;font-weight:700;color:#111;line-height:16px">Měsíc</div>
<div class="a nw" style="left:16.5px;top:15.60px;font-size:12.6px;color:#1a1a1a;line-height:16px">Leden</div>
<div class="a nw" style="left:16.5px;top:31.60px;font-size:12.6px;color:#1a1a1a;line-height:16px">Únor</div>
<div class="a nw" style="left:16.5px;top:47.60px;font-size:12.6px;color:#1a1a1a;line-height:16px">Březen</div>
<div class="a nw" style="left:16.5px;top:63.60px;font-size:12.6px;color:#1a1a1a;line-height:16px">Duben</div>
<div class="a nw" style="left:16.5px;top:79.60px;font-size:12.6px;color:#1a1a1a;line-height:16px">Květen</div>
<div class="a nw" style="left:16.5px;top:95.60px;font-size:12.6px;color:#1a1a1a;line-height:16px">Červen</div>
<div class="a nw" style="left:16.5px;top:111.60px;font-size:12.6px;color:#1a1a1a;line-height:16px">Červenec</div>
<div class="a nw" style="left:16.5px;top:127.60px;font-size:12.6px;color:#1a1a1a;line-height:16px">Srpen</div>
<div class="a nw" style="left:16.5px;top:143.60px;font-size:12.6px;color:#1a1a1a;line-height:16px">Září</div>
<div class="a" style="left:0;top:160.00px;width:115.4px;height:16px;background:#1e90ff"></div>
<div class="a nw" style="left:16.5px;top:159.60px;font-size:12.6px;color:#fff;line-height:16px">Říjen</div>
<div class="a nw" style="left:16.5px;top:175.60px;font-size:12.6px;color:#1a1a1a;line-height:16px">Listopad</div>
<div class="a nw" style="left:16.5px;top:191.60px;font-size:12.6px;color:#1a1a1a;line-height:16px">Prosinec</div>
</div>
<svg class="a" style="left:0;top:0;z-index:30" width="1920" height="1080"><path d="M457.6 160.8 L647.5 336.4" stroke="#000" stroke-width="2.1" stroke-linecap="round" fill="none"/></svg>
<div class="a" style="left:646px;top:335px;width:373px;height:164px;border:2px solid #000;background:rgba(255,197,12,.86);z-index:31"></div>
<div class="a nw" style="left:646px;top:335px;width:373px;height:164px;z-index:32;text-align:center;font-size:33px;color:#111;line-height:164px;padding-top:2.5px;padding-right:1px">Filtr měsíců</div></body></html>
